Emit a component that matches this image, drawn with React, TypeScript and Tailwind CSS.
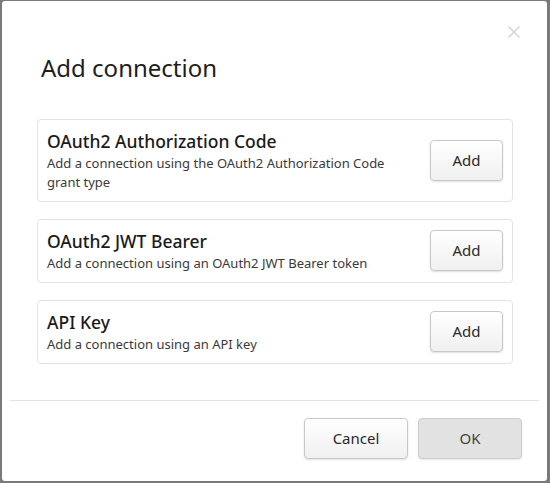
const connections = [
  {
    title: "OAuth2 Authorization Code",
    description: "Add a connection using the OAuth2 Authorization Code grant type",
  },
  {
    title: "OAuth2 JWT Bearer",
    description: "Add a connection using an OAuth2 JWT Bearer token",
  },
  {
    title: "API Key",
    description: "Add a connection using an API key",
  },
];

function CloseIcon() {
  return (
    <svg width="12" height="12" viewBox="0 0 12 12" className="block">
      <path d="M0.5 0.5 L11.5 11.5 M11.5 0.5 L0.5 11.5" stroke="#cfcfcf" strokeWidth="1.3" fill="none" />
    </svg>
  );
}

const btn =
  "h-[41px] border border-[#c8c8c8] rounded-[4px] bg-gradient-to-b from-white to-[#f0f0f0] shadow-[0_1px_2px_rgba(0,0,0,0.13)] text-[15px] text-[#2a2a2a]";

export default function App() {
  return (
    <div
      className="w-[550px] h-[483px] bg-[#7a7a7a] pt-[1px] pl-[2px] pr-[3px] pb-[2px]"
      style={{ fontFamily: '"Noto Sans", "Open Sans", sans-serif' }}
    >
      <div className="h-full bg-white rounded-[3px] flex flex-col">
        <div className="flex justify-end pt-[25px] pr-[27px]">
          <button className="p-0">
            <CloseIcon />
          </button>
        </div>
        <h1 className="pl-[39px] mt-[12px] text-[24px] text-[#1e1e1e]">Add connection</h1>

        <div className="mt-[33px] ml-[35px] mr-[34px] flex flex-col gap-[17px]">
          {connections.map((c) => (
            <div
              key={c.title}
              className="flex items-center justify-between border border-[#e3e3e3] rounded-[4px] pl-[9px] pr-[9px] pt-[8px] pb-[9px]"
            >
              <div className="w-[350px]">
                <div className="text-[17.5px] leading-[26px] font-medium text-[#1a1a1a]">{c.title}</div>
                <div className="text-[13px] leading-[19px] text-[#3a3a3a]">{c.description}</div>
              </div>
              <button className={`w-[73px] ${btn}`}>Add</button>
            </div>
          ))}
        </div>

        <div className="mt-auto mx-[8px] border-t border-[#dfe2e6]" />
        <div className="flex justify-end gap-[10px] pt-[17px] pb-[22px] pr-[25px]">
          <button className={`w-[104px] ${btn}`}>Cancel</button>
          <button className="w-[104px] h-[41px] border border-[#cdcdcd] rounded-[4px] bg-[#e2e2e2] shadow-[0_1px_2px_rgba(0,0,0,0.1)] text-[15px] text-[#444]">
            OK
          </button>
        </div>
      </div>
    </div>
  );
}
